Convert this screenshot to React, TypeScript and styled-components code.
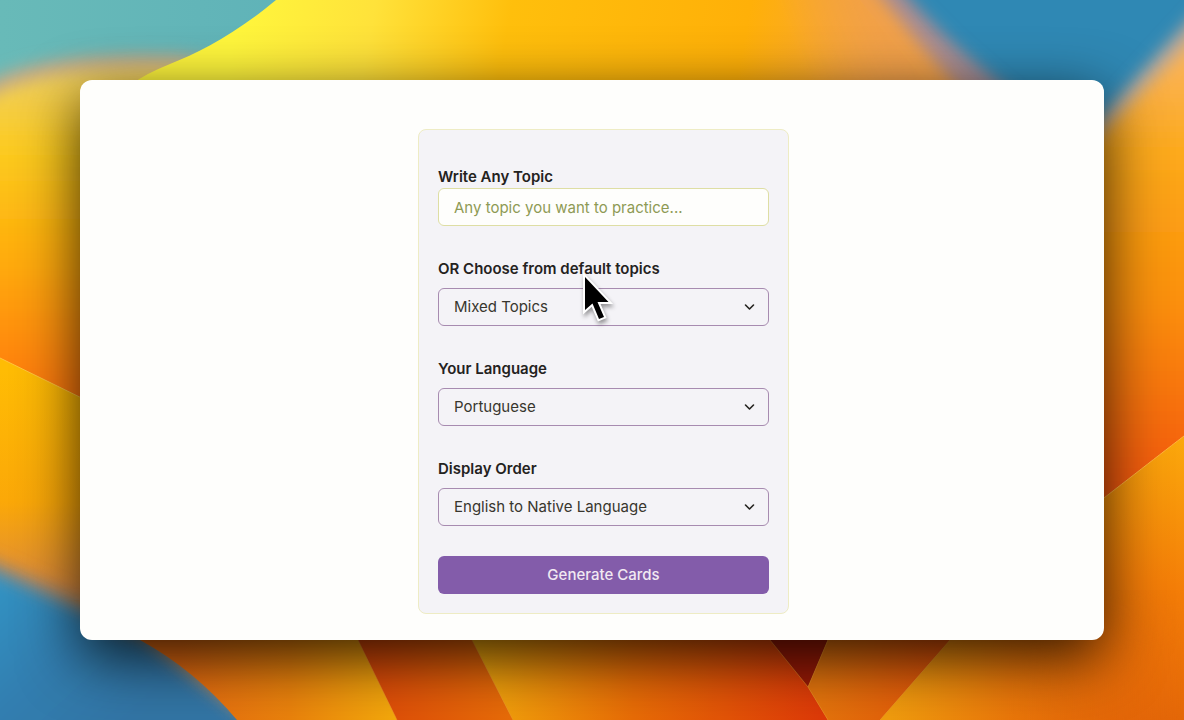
import React from "react";
import styled, { createGlobalStyle } from "styled-components";

const GlobalStyle = createGlobalStyle`
  *, *::before, *::after { box-sizing: border-box; }
  body {
    margin: 0;
    font-family: Inter, "Liberation Sans", sans-serif;
    color: #24221e;
  }
`;

const Desktop = styled.div`
  position: relative;
  display: flex;
  min-height: 100vh;
  padding: 80px;
  overflow: hidden;
`;

const WallpaperArt = styled.svg`
  position: absolute;
  inset: 0;
  width: 100%;
  height: 100%;
`;

const Window = styled.main`
  position: relative;
  flex: 1;
  display: flex;
  justify-content: center;
  align-items: flex-start;
  padding: 49px 0 26px 23px;
  border-radius: 12px;
  background: #fefefc;
  box-shadow: 0 18px 60px rgba(0, 0, 0, 0.8);
`;

const Card = styled.form`
  display: flex;
  flex-direction: column;
  gap: 32px;
  width: 371px;
  max-width: 100%;
  padding: 36px 19px 19px;
  border: 1px solid #eeecc4;
  border-radius: 8px;
  background: #f4f3f7;
`;

const Field = styled.div<{ $gap?: number }>`
  display: flex;
  flex-direction: column;
  gap: ${(p) => p.$gap ?? 8}px;
`;

const Label = styled.label`
  font-size: 15px;
  font-weight: 600;
  line-height: 22px;
  white-space: nowrap;
`;

const TextInput = styled.input`
  width: 100%;
  height: 38px;
  padding: 0 15px;
  border: 1px solid #dedea4;
  border-radius: 6px;
  background: #fefefc;
  color: inherit;
  font: 400 15px/22px Inter, "Liberation Sans", sans-serif;
  outline: none;

  &::placeholder {
    color: #8e9a54;
    opacity: 1;
  }
`;

const SelectBox = styled.div`
  position: relative;
`;

const Select = styled.select`
  display: block;
  width: 100%;
  height: 38px;
  padding: 0 40px 0 15px;
  border: 1px solid #a78bb0;
  border-radius: 6px;
  background: transparent;
  color: #38362e;
  font: 400 15px/22px Inter, "Liberation Sans", sans-serif;
  appearance: none;
  outline: none;
`;

const Chevron = styled.svg`
  position: absolute;
  top: 14px;
  right: 14px;
  width: 11px;
  height: 10px;
  pointer-events: none;
`;

const SubmitButton = styled.button`
  height: 38px;
  margin-top: -2px;
  border: 0;
  border-radius: 6px;
  background: #835caa;
  color: #f1e9f2;
  font: 500 15px/22px Inter, "Liberation Sans", sans-serif;
  cursor: pointer;
`;

const Pointer = styled.svg`
  position: absolute;
  z-index: 2;
  top: -16px;
  left: 142px;
  width: 36px;
  height: 56px;
  overflow: visible;
  pointer-events: none;
  filter: drop-shadow(1px 3px 2px rgba(0, 0, 0, 0.4));
`;

function Wallpaper() {
  return (
    <WallpaperArt viewBox="0 0 1184 720" preserveAspectRatio="none" aria-hidden="true">
      <defs>
        <filter id="soft" x="-20%" y="-20%" width="140%" height="140%">
          <feGaussianBlur stdDeviation="8" />
        </filter>
        <linearGradient id="petalTop" gradientUnits="userSpaceOnUse" x1="240" y1="0" x2="900" y2="120">
          <stop offset="0" stopColor="#fff63c" />
          <stop offset="0.2" stopColor="#ffe23a" />
          <stop offset="0.4" stopColor="#ffbf0c" />
          <stop offset="0.75" stopColor="#ffb008" />
          <stop offset="1" stopColor="#f3a050" />
        </linearGradient>
        <linearGradient id="petalLeft" gradientUnits="userSpaceOnUse" x1="0" y1="70" x2="0" y2="390">
          <stop offset="0" stopColor="#efcf60" />
          <stop offset="0.25" stopColor="#fccb20" />
          <stop offset="0.6" stopColor="#ffab08" />
          <stop offset="1" stopColor="#ff7a0c" />
        </linearGradient>
        <linearGradient id="petalLeftLow" gradientUnits="userSpaceOnUse" x1="0" y1="370" x2="0" y2="590">
          <stop offset="0" stopColor="#ffbc04" />
          <stop offset="0.6" stopColor="#fba808" />
          <stop offset="1" stopColor="#dc8a3c" />
        </linearGradient>
        <linearGradient id="petalRight" gradientUnits="userSpaceOnUse" x1="0" y1="40" x2="0" y2="480">
          <stop offset="0" stopColor="#f9b464" />
          <stop offset="0.25" stopColor="#fdaa1c" />
          <stop offset="0.6" stopColor="#fb8f08" />
          <stop offset="1" stopColor="#f45a0c" />
        </linearGradient>
        <linearGradient id="petalRightLow" gradientUnits="userSpaceOnUse" x1="1184" y1="440" x2="1110" y2="720">
          <stop offset="0" stopColor="#fba80c" />
          <stop offset="0.5" stopColor="#f47e08" />
          <stop offset="1" stopColor="#e26408" />
        </linearGradient>
        <linearGradient id="skyLeft" x1="0" y1="0" x2="1" y2="0">
          <stop offset="0" stopColor="#68bab8" />
          <stop offset="1" stopColor="#5cb0b8" />
        </linearGradient>
        <linearGradient id="skyLow" gradientUnits="userSpaceOnUse" x1="0" y1="570" x2="140" y2="720">
          <stop offset="0" stopColor="#3494c4" />
          <stop offset="0.5" stopColor="#307eb0" />
          <stop offset="1" stopColor="#3274a4" />
        </linearGradient>
        <linearGradient id="foldA" gradientUnits="userSpaceOnUse" x1="180" y1="0" x2="400" y2="0">
          <stop offset="0" stopColor="#e46a10" />
          <stop offset="0.5" stopColor="#ea820c" />
          <stop offset="1" stopColor="#f4aa0c" />
        </linearGradient>
        <linearGradient id="foldB" gradientUnits="userSpaceOnUse" x1="360" y1="0" x2="510" y2="0">
          <stop offset="0" stopColor="#dc4808" />
          <stop offset="1" stopColor="#e86c08" />
        </linearGradient>
        <linearGradient id="foldC" gradientUnits="userSpaceOnUse" x1="480" y1="0" x2="820" y2="0">
          <stop offset="0" stopColor="#f2a60c" />
          <stop offset="0.45" stopColor="#e86c06" />
          <stop offset="1" stopColor="#de3a08" />
        </linearGradient>
        <linearGradient id="foldD" gradientUnits="userSpaceOnUse" x1="820" y1="0" x2="940" y2="0">
          <stop offset="0" stopColor="#e4740c" />
          <stop offset="1" stopColor="#e25408" />
        </linearGradient>
        <linearGradient id="foldE" gradientUnits="userSpaceOnUse" x1="890" y1="690" x2="1184" y2="700">
          <stop offset="0" stopColor="#f09c0e" />
          <stop offset="0.4" stopColor="#ea780a" />
          <stop offset="1" stopColor="#e26408" stopOpacity="0" />
        </linearGradient>
        <linearGradient id="fade" gradientUnits="userSpaceOnUse" x1="790" y1="40" x2="890" y2="0">
          <stop offset="0" stopColor="#fff" />
          <stop offset="1" stopColor="#000" />
        </linearGradient>
        <linearGradient id="fadeDown" gradientUnits="userSpaceOnUse" x1="0" y1="560" x2="0" y2="650">
          <stop offset="0" stopColor="#000" />
          <stop offset="1" stopColor="#fff" />
        </linearGradient>
        <mask id="topFade">
          <rect width="1184" height="200" fill="url(#fade)" />
        </mask>
        <mask id="lowFade">
          <rect y="500" width="1184" height="220" fill="url(#fadeDown)" />
        </mask>
      </defs>

      <rect width="1184" height="720" fill="#e8780c" />

      <rect width="400" height="300" fill="url(#skyLeft)" />
      <path d="M-40 98 C10 62 70 52 180 55 L420 90 L400 420 L-40 420 Z" fill="#c1a98a" filter="url(#soft)" />
      <path d="M-40 116 C10 76 70 66 180 68 L420 100 L400 420 L-40 420 Z" fill="url(#petalLeft)" filter="url(#soft)" />
      <path d="M0 358 L200 456 L200 600 L0 600 Z" fill="url(#petalLeftLow)" />
      <path d="M0 358 L200 456" stroke="#ffc63c" strokeWidth="1" />

      <rect x="800" width="384" height="200" fill="#2f88b4" />
      <path d="M400 -40 H880 C920 20 980 70 1060 130 H400 Z" fill="#a88c92" filter="url(#soft)" />
      <path d="M400 -40 H852 C900 20 940 70 1000 130 H400 Z" fill="#f1a04a" filter="url(#soft)" />
      <path d="M276 0 C235 34 200 52 170 64 Q145 74 132 84 L800 110 H950 C915 70 890 40 860 0 Z" fill="url(#petalTop)" mask="url(#topFade)" />

      <path d="M1230 -24 C1160 50 1120 96 1070 150 V600 H1230 Z" fill="#b3a69c" filter="url(#soft)" />
      <path d="M1230 0 C1170 62 1130 104 1070 166 V600 H1230 Z" fill="url(#petalRight)" filter="url(#soft)" />
      <path d="M1184 436 C1150 462 1125 482 1070 524 L880 720 H1184 Z" fill="url(#petalRightLow)" />
      <path d="M1184 436 C1150 462 1125 482 1070 524" fill="none" stroke="#ffb43c" />

      <path d="M-40 546 L140 624 L300 760 H-40 Z" fill="#a5886c" filter="url(#soft)" />
      <path d="M-40 556 L140 638 L300 760 H-40 Z" fill="url(#skyLow)" filter="url(#soft)" />
      <path d="M130 630 H360 L397 720 H237 Q195 670 140 640 Z" fill="url(#foldA)" />
      <path d="M353 630 H468 L513 720 H397 Z" fill="url(#foldB)" />
      <path d="M467 630 H765 L808 687 L828 720 H513 Z" fill="url(#foldC)" />
      <path d="M762 630 H832 L808 687 Z" fill="#9c1a06" />
      <path d="M832 630 H959 L880 720 H828 L808 687 Z" fill="url(#foldD)" />
      <path d="M994 590 H1184 V720 H880 L950 640 Z" fill="url(#foldE)" mask="url(#lowFade)" />
      <path
        d="M358 640 L397 720 M472 640 L513 720 M770 640 L808 687 L828 720 M828 640 L808 687 M950 640 L880 720"
        fill="none"
        stroke="#f0a030"
        strokeOpacity="0.5"
      />
    </WallpaperArt>
  );
}

function MousePointer() {
  return (
    <Pointer viewBox="0 0 36 56" aria-hidden="true">
      <path
        d="M5 5 V38 L12.5 31.5 L19 47 L24 45 L17.5 30 H28.5 Z"
        fill="#000"
        stroke="#fff"
        strokeWidth="4"
        paintOrder="stroke"
      />
    </Pointer>
  );
}

interface SelectFieldProps {
  id: string;
  label: string;
  options: string[];
  children?: React.ReactNode;
}

function SelectField({ id, label, options, children }: SelectFieldProps) {
  return (
    <Field>
      <Label htmlFor={id}>{label}</Label>
      <SelectBox>
        <Select id={id} defaultValue={options[0]}>
          {options.map((option) => (
            <option key={option}>{option}</option>
          ))}
        </Select>
        <Chevron viewBox="0 0 11 10" aria-hidden="true">
          <path
            d="M1.5 3 L5.5 7 L9.5 3"
            fill="none"
            stroke="#24221e"
            strokeWidth="1.6"
            strokeLinecap="round"
            strokeLinejoin="round"
          />
        </Chevron>
        {children}
      </SelectBox>
    </Field>
  );
}

export default function App() {
  return (
    <Desktop>
      <GlobalStyle />
      <Wallpaper />
      <Window>
        <Card onSubmit={(event) => event.preventDefault()}>
          <Field $gap={0}>
            <Label htmlFor="topic">Write Any Topic</Label>
            <TextInput id="topic" type="text" placeholder="Any topic you want to practice..." />
          </Field>
          <SelectField id="default-topic" label="OR Choose from default topics" options={["Mixed Topics"]}>
            <MousePointer />
          </SelectField>
          <SelectField id="language" label="Your Language" options={["Portuguese"]} />
          <SelectField id="order" label="Display Order" options={["English to Native Language"]} />
          <SubmitButton type="submit">Generate Cards</SubmitButton>
        </Card>
      </Window>
    </Desktop>
  );
}
